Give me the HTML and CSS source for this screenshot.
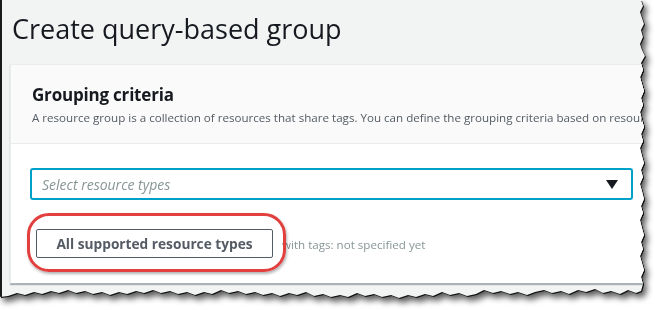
FILE: index.html
```html
<!DOCTYPE html>
<html lang="en">

<head>
    <meta charset="UTF-8">
    <meta name="viewport" content="width=device-width, initial-scale=1.0">
    <title>Create query-based group</title>
    <link rel="stylesheet" href="styles.css">
</head>

<body>
    <div class="sheet">
        <div class="screen">
            <h1 class="title">Create query-based group</h1>
            <div class="panel">
                <div class="panel-head">
                    <h2>Grouping criteria</h2>
                    <p>A resource group is a collection of resources that share tags. You can define the grouping criteria based on resource types and tags.</p>
                </div>
                <div class="panel-body">
                    <div class="select">
                        <span>Select resource types</span>
                        <svg width="12" height="9" viewBox="0 0 12 9"><polygon points="0,0 12,0 6,9" fill="#16191f"/></svg>
                    </div>
                    <div class="row">
                        <span class="mark">
                            <button class="btn">All supported resource types</button>
                        </span>
                        <span class="hint">with tags: not specified yet</span>
                    </div>
                </div>
            </div>
        </div>
    </div>
</body>

</html>
```

FILE: styles.css
```css
* {
    padding: 0;
    margin: 0;
    box-sizing: border-box;
}

body {
    background: #fff;
    font-family: "Open Sans", "Noto Sans", sans-serif;
}

.sheet {
    width: 655px;
    height: 310px;
    filter: drop-shadow(1.5px 1.5px 0 #111) drop-shadow(3px 4px 3px rgba(0, 0, 0, 0.65));
}

.screen {
    width: 650px;
    height: 300px;
    overflow: hidden;
    background: #f2f3f3;
    border-left: 2px solid #1a1a1a;
    padding: 0 0 0 8px;
    clip-path: polygon(641px 0, 643px 6px, 640px 12px, 642px 18px, 644px 24px, 641px 30px, 643px 37px, 640px 44px, 642px 50px, 645px 56px, 641px 63px, 643px 70px, 640px 77px, 642px 84px, 644px 91px, 641px 98px, 643px 105px, 640px 112px, 642px 120px, 644px 127px, 641px 134px, 643px 141px, 640px 148px, 642px 156px, 644px 163px, 641px 170px, 643px 177px, 640px 184px, 642px 191px, 644px 199px, 641px 206px, 643px 213px, 640px 220px, 642px 228px, 644px 235px, 641px 242px, 643px 249px, 640px 256px, 642px 263px, 644px 270px, 641px 277px, 643px 284px, 641px 291px, 636px 293px, 628px 290px, 620px 294px, 611px 291px, 603px 293px, 595px 289px, 586px 292px, 578px 290px, 569px 294px, 561px 291px, 552px 293px, 544px 290px, 535px 292px, 527px 295px, 518px 292px, 510px 294px, 501px 291px, 493px 293px, 484px 290px, 476px 294px, 467px 296px, 459px 293px, 450px 295px, 442px 292px, 433px 296px, 425px 294px, 416px 297px, 408px 295px, 399px 298px, 391px 295px, 382px 297px, 374px 294px, 365px 296px, 357px 293px, 348px 297px, 340px 295px, 331px 297px, 323px 294px, 314px 296px, 306px 292px, 297px 295px, 289px 293px, 280px 296px, 272px 293px, 263px 295px, 255px 292px, 246px 294px, 238px 291px, 229px 293px, 221px 290px, 212px 294px, 204px 292px, 195px 295px, 187px 292px, 178px 294px, 170px 291px, 161px 293px, 153px 290px, 144px 293px, 136px 291px, 127px 294px, 119px 292px, 110px 295px, 102px 292px, 93px 294px, 85px 291px, 76px 293px, 68px 290px, 59px 293px, 51px 291px, 42px 294px, 34px 292px, 25px 295px, 17px 293px, 8px 296px, 0 297px, 0 0);
}

.title {
    font-size: 27px;
    font-weight: 400;
    color: #16191f;
    line-height: 34px;
    padding: 12px 0 0 2px;
    height: 64px;
    white-space: nowrap;
}

.panel {
    width: 700px;
    background: #fff;
    border: 1px solid #eaeded;
    border-bottom: 1px solid #aab7b8;
    box-shadow: 0 1px 1px rgba(0, 28, 36, 0.3);
}

.panel-head {
    background: #fafafa;
    border-bottom: 1px solid #eaeded;
    padding: 18px 20px 0 21px;
    height: 79px;
    white-space: nowrap;
}

.panel-head h2 {
    font-size: 17px;
    font-weight: 700;
    color: #16191f;
    line-height: 24px;
    letter-spacing: -0.2px;
}

.panel-head p {
    font-size: 11.6px;
    color: #545b64;
    line-height: 18px;
    margin-top: 2px;
}

.panel-body {
    padding: 24px 0 0 19px;
    height: 139px;
}

.select {
    width: 603px;
    height: 32px;
    border: 2px solid #00a1c9;
    border-radius: 3px;
    display: flex;
    align-items: center;
    justify-content: space-between;
    padding: 0 13px 0 10px;
}

.select span {
    font-style: italic;
    font-size: 14px;
    color: #879596;
}

.row {
    display: flex;
    align-items: center;
    margin-top: 29px;
    padding-left: 6px;
}

.mark {
    position: relative;
}

.mark::after {
    content: "";
    position: absolute;
    top: -16px;
    left: -9px;
    right: -13px;
    bottom: -14px;
    border: 3px solid #e2403f;
    border-radius: 22px;
    box-shadow: 1px 2px 3px rgba(0, 0, 0, 0.3);
}

.btn {
    display: block;
    width: 237px;
    height: 29px;
    background: #fff;
    border: 1px solid #545b64;
    border-radius: 2px;
    font-family: inherit;
    font-size: 13.7px;
    font-weight: 700;
    color: #545b64;
}

.hint {
    margin-left: 9px;
    margin-top: 2px;
    font-size: 11.6px;
    color: #879596;
}
```
